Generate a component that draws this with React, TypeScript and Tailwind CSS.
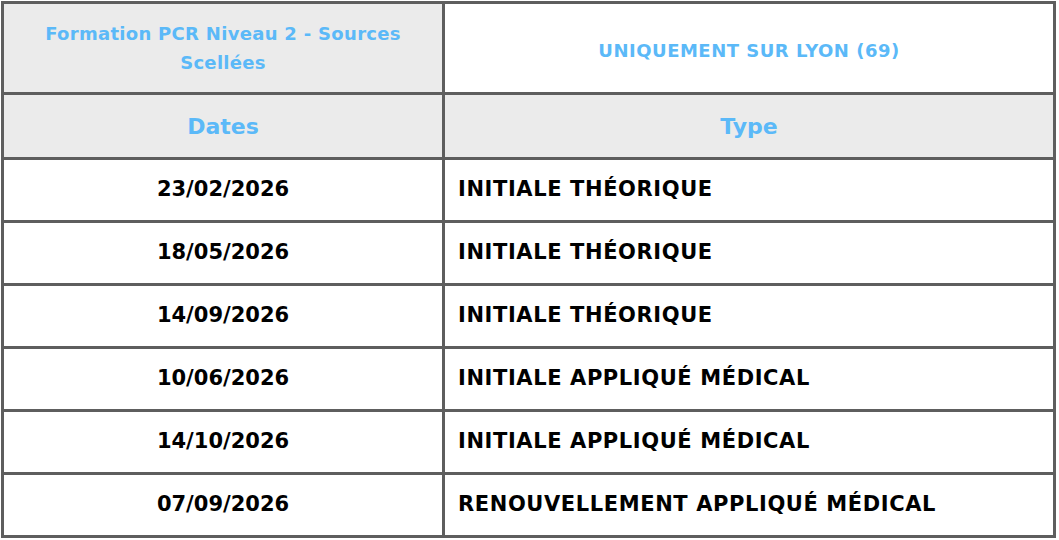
const rows = [
  { date: "23/02/2026", type: "INITIALE THÉORIQUE" },
  { date: "18/05/2026", type: "INITIALE THÉORIQUE" },
  { date: "14/09/2026", type: "INITIALE THÉORIQUE" },
  { date: "10/06/2026", type: "INITIALE APPLIQUÉ MÉDICAL" },
  { date: "14/10/2026", type: "INITIALE APPLIQUÉ MÉDICAL" },
  { date: "07/09/2026", type: "RENOUVELLEMENT APPLIQUÉ MÉDICAL" },
];

export default function App() {
  return (
    <div className="h-[540px] w-[1059px] bg-white pl-px pt-px font-['DejaVu_Sans',sans-serif]">
      <div className="grid w-[1055px] grid-cols-[438px_608px] gap-[3px] bg-[#5e5e5e] p-[3px]">
        <div className="flex h-[88px] items-center justify-center bg-[#ebebeb] px-6 text-center text-[18px] leading-[29px] font-semibold tracking-[0.3px] text-[#5bb9f8]">
          Formation PCR Niveau 2 - Sources Scellées
        </div>
        <div className="flex h-[88px] items-center justify-center bg-white pt-1 text-[18px] font-bold tracking-[0.5px] text-[#5bb9f8]">
          UNIQUEMENT SUR LYON (69)
        </div>
        <div className="flex h-[62px] items-center justify-center bg-[#ebebeb] text-[22px] font-bold text-[#5bb9f8]">
          Dates
        </div>
        <div className="flex h-[62px] items-center justify-center bg-[#ebebeb] text-[22px] font-bold text-[#5bb9f8]">
          Type
        </div>
        {rows.map((r) => (
          <>
            <div key={r.date + "d"} className="flex h-[60px] items-center justify-center bg-white text-[21px] font-bold text-black">
              {r.date}
            </div>
            <div key={r.date + "t"} className="flex h-[60px] items-center bg-white pl-[13px] text-[21px] font-bold tracking-[0.6px] text-black">
              {r.type}
            </div>
          </>
        ))}
      </div>
    </div>
  );
}
